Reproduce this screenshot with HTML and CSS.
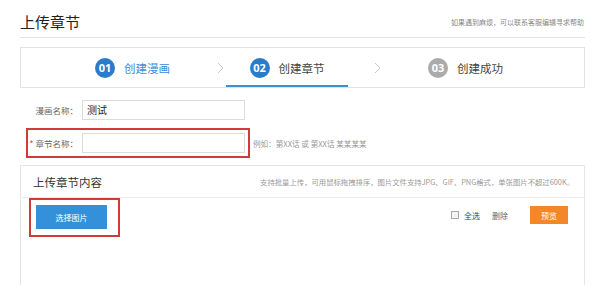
FILE: index.html
```html
<!DOCTYPE html>
<html lang="zh-CN">
<head>
<meta charset="utf-8">
<title>上传章节</title>
<link rel="stylesheet" href="styles.css">
</head>
<body>
<div class="page">
  <div class="header">
    <h1 class="title">上传章节</h1>
    <span class="help">如果遇到麻烦，可以联系客服编辑寻求帮助</span>
  </div>

  <div class="steps">
    <div class="step done">
      <span class="num">01</span><span class="label">创建漫画</span>
    </div>
    <svg class="chev chev1" width="7" height="12" viewBox="0 0 7 12"><polyline points="1,1 6,6 1,11" fill="none" stroke="#c9c9c9" stroke-width="1"/></svg>
    <div class="step active">
      <span class="num">02</span><span class="label">创建章节</span>
    </div>
    <svg class="chev chev2" width="7" height="12" viewBox="0 0 7 12"><polyline points="1,1 6,6 1,11" fill="none" stroke="#c9c9c9" stroke-width="1"/></svg>
    <div class="step todo">
      <span class="num">03</span><span class="label">创建成功</span>
    </div>
  </div>

  <div class="form">
    <div class="row">
      <div class="field">
        <span class="flabel">漫画名称：</span>
        <div class="input">测试</div>
      </div>
    </div>
    <div class="row">
      <div class="field marked">
        <span class="flabel"><i class="req">*</i> 章节名称：</span>
        <div class="input"></div>
      </div>
      <span class="hint">例如：第XX话 或 第XX话 某某某某</span>
    </div>
  </div>

  <div class="panel">
    <div class="panel-head">
      <span class="panel-title">上传章节内容</span>
      <span class="panel-note">支持批量上传，可用鼠标拖拽排序，图片文件支持JPG、GIF、PNG格式，单张图片不超过600K。</span>
    </div>
    <div class="panel-body">
      <div class="pick-wrap">
        <button class="pick">选择图片</button>
      </div>
      <div class="tools">
        <span class="check"></span>
        <span class="tool">全选</span>
        <span class="tool del">删除</span>
        <button class="preview">预览</button>
      </div>
    </div>
  </div>
</div>
</body>
</html>
```
FILE: styles.css
```css
html, body {
  margin: 0;
  padding: 0;
  background: #fff;
  overflow: hidden;
}
body {
  font-family: "Noto Sans CJK SC", "Noto Sans", sans-serif;
  color: #333;
}
.page {
  width: 565px;
  margin-left: 20px;
}
.header {
  display: flex;
  justify-content: space-between;
  align-items: center;
  height: 30px;
  padding-top: 7px;
  border-bottom: 1px solid #e4e4e4;
}
.title {
  margin: 0;
  font-size: 15px;
  font-weight: normal;
  line-height: 16px;
  color: #222;
}
.help {
  font-size: 7px;
  color: #888;
  margin-right: 1px;
}
.steps {
  display: flex;
  align-items: center;
  height: 39px;
  margin-top: 9px;
  border: 1px solid #e2e2e2;
  padding-left: 74px;
}
.step {
  display: flex;
  align-items: center;
  height: 100%;
  box-sizing: border-box;
}
.num {
  width: 20px;
  height: 20px;
  border-radius: 50%;
  background: #2a7ccb;
  color: #fff;
  font-family: "Open Sans", sans-serif;
  font-weight: bold;
  font-size: 11px;
  line-height: 20px;
  text-align: center;
  margin-right: 9px;
}
.label {
  font-size: 11.5px;
  color: #444;
}
.step.done .label {
  color: #3d8bd2;
}
.step.active {
  width: 122px;
  justify-content: center;
  border-bottom: 2px solid #3a8fd6;
  padding-top: 2px;
  margin-left: 2px;
}
.step.todo .num {
  background: #ababab;
}
.chev1 {
  margin-left: 47px;
}
.chev2 {
  margin-left: 26px;
  margin-right: 47px;
}
.form {
  margin-top: 7px;
}
.row {
  display: flex;
  align-items: center;
  margin-bottom: 3px;
}
.field {
  display: flex;
  align-items: center;
  margin-left: 6px;
  border: 2px solid transparent;
  padding: 3px 3px 3px 0;
}
.field.marked {
  border-color: #d23a3a;
}
.flabel {
  width: 50px;
  text-align: right;
  font-size: 8.5px;
  color: #666;
  margin-right: 4px;
  white-space: nowrap;
}
.req {
  font-style: normal;
  color: #e03c3c;
}
.input {
  width: 163px;
  height: 20px;
  box-sizing: border-box;
  border: 1px solid #dcdcdc;
  font-size: 10px;
  line-height: 18px;
  padding-left: 4px;
  color: #222;
}
.hint {
  font-size: 7.6px;
  color: #999;
  margin-left: 3px;
}
.panel {
  margin-top: 7px;
  border: 1px solid #e6e6e6;
  height: 140px;
}
.panel-head {
  display: flex;
  justify-content: space-between;
  align-items: center;
  height: 31px;
  border-bottom: 1px solid #ececec;
  padding: 0 10px 0 12px;
}
.panel-title {
  font-size: 11.5px;
  color: #333;
}
.panel-note {
  font-size: 7.35px;
  color: #999;
}
.panel-body {
  display: flex;
  justify-content: space-between;
  align-items: flex-start;
  padding: 0 16px 0 8px;
}
.pick-wrap {
  border: 2px solid #d23a3a;
  padding: 5px 11px 6px 5px;
}
.pick {
  display: block;
  width: 71px;
  height: 24px;
  border: 0;
  background: #3590da;
  color: #fff;
  font-family: inherit;
  font-size: 8px;
  padding: 0;
}
.tools {
  display: flex;
  align-items: center;
  margin-top: 8px;
}
.check {
  width: 6px;
  height: 6px;
  border: 1px solid #aaa;
  background: #f4f4f4;
  margin-right: 5px;
}
.tool {
  font-size: 8px;
  color: #444;
}
.tool.del {
  margin-left: 12px;
  color: #666;
}
.preview {
  width: 38px;
  height: 18px;
  margin-left: 22px;
  border: 0;
  padding: 0;
  background: #f5872b;
  color: #fff;
  font-family: inherit;
  font-size: 8px;
}
```
